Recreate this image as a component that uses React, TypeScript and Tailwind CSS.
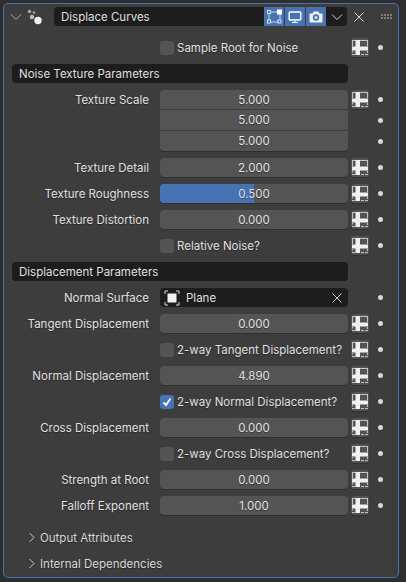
const FONT = "font-['Inter','Noto_Sans',sans-serif]";

const Decorator = () => (
  <div className="flex h-[19px] w-[18px] items-center justify-center rounded-[3px] bg-[#525252] shadow-[0_1px_0_#2e2e2e]">
    <svg width="16" height="15" viewBox="0 0 16 15" fill="none">
      <path
        d="M0 0.5H16M0.5 0V6M15.5 0V6M0.5 11V12.5M15.5 11V13M0 14.5H3M9 14.5H12M13 14.5H16"
        stroke="#c4c4c4"
      />
      <path d="M3.5 0H8V6.5H16V10.5H8V15H3.5V10.5H0V6.5H3.5Z" fill="#f0f0f0" />
    </svg>
  </div>
);

const Dot = () => (
  <div className="flex w-[22px] justify-center">
    <div className="h-[5px] w-[5px] rounded-full bg-[#d8d8d8]" />
  </div>
);

const Right = ({ decorator = true }: { decorator?: boolean }) => (
  <div className="flex w-[50px] shrink-0 items-center pl-[3px]">
    {decorator ? <Decorator /> : <div className="w-[18px]" />}
    <Dot />
  </div>
);

const Row = ({ label, children, decorator = true }: { label?: string; children: React.ReactNode; decorator?: boolean }) => (
  <div className="flex h-[19px] items-center">
    <div className="w-[145px] shrink-0 truncate pt-[2px] text-right text-[#e0e0e0]">{label}</div>
    <div className="ml-[11px] w-[188px] shrink-0">{children}</div>
    <Right decorator={decorator} />
  </div>
);

const NumberField = ({ value }: { value: string }) => (
  <div className="flex h-[19px] items-center justify-center rounded-[4px] bg-[#545454] pt-[2px] text-[#e0e0e0] shadow-[0_1px_0_#2e2e2e]">
    {value}
  </div>
);

const Check = ({ label, checked = false }: { label: string; checked?: boolean }) => (
  <Row>
    <div className="flex items-center text-[#e0e0e0]">
      <div
        className={`flex h-[14px] w-[14px] items-center justify-center rounded-[3px] ${
          checked ? "bg-[#4772b3]" : "bg-[#545454]"
        }`}
      >
        {checked && (
          <svg width="12" height="12" viewBox="0 0 12 12" fill="none">
            <path d="M2.5 6.5L5 9L9.5 2.5" stroke="#ffffff" strokeWidth="1.8" />
          </svg>
        )}
      </div>
      <span className="ml-[3px] whitespace-nowrap pt-[2px]">{label}</span>
    </div>
  </Row>
);

const Section = ({ label }: { label: string }) => (
  <div className="ml-[8px] flex h-[19px] w-[336px] items-center rounded-[4px] bg-[#1d1d1d] pl-[7px] pt-[2px] text-[#e0e0e0]">
    {label}
  </div>
);

const Sub = ({ label }: { label: string }) => (
  <div className="flex h-5 items-center pl-[24px] text-[#d8d8d8]">
    <svg width="8" height="12" viewBox="0 0 8 12" fill="none">
      <path d="M1.5 1L6 5.5L1.5 10" stroke="#c8c8c8" />
    </svg>
    <span className="ml-[4px] pt-[2px]">{label}</span>
  </div>
);

export default function App() {
  return (
    <div className={`h-[582px] w-[406px] overflow-hidden bg-[#2e2e2e] pl-[3px] pt-[3px] text-[11.5px] ${FONT} [text-shadow:0_1px_1px_#00000060]`}>
      <div className="flex h-[575px] w-[396px] flex-col rounded-[5px] border border-[#4772b3] bg-[#3d3d3d]">
        <div className="mt-[3px] flex h-[19px] items-center pl-[6px]">
          <svg width="12" height="8" viewBox="0 0 12 8" fill="none">
            <path d="M1 1.5L6 6.5L11 1.5" stroke="#b0b0b0" />
          </svg>
          <svg className="ml-[5px]" width="16" height="16" viewBox="0 0 16 16">
            <circle cx="2.5" cy="2.5" r="1.8" fill="#a8a8a8" />
            <circle cx="7" cy="3.5" r="1.3" fill="#a8a8a8" />
            <circle cx="5" cy="8" r="2.2" fill="#c0c0c0" />
            <circle cx="11" cy="11.5" r="3.7" fill="#f2f2f2" />
          </svg>
          <div className="ml-[11px] flex h-[19px] w-[210px] items-center rounded-l-[4px] bg-[#1d1d1d] pl-[7px] pt-[2px] text-[#e0e0e0]">
            Displace Curves
          </div>
          <div className="flex h-[19px] w-[20px] items-center justify-center bg-[#4772b3]">
            <svg width="16" height="16" viewBox="0 0 16 16" fill="none">
              <path d="M3 5V11M5 3H11M14 5V11M5 13H12" stroke="#c8d4e8" />
              <rect x="1.5" y="1.5" width="3" height="3" stroke="#d8e0f0" />
              <rect x="1.5" y="11" width="3" height="3" stroke="#d8e0f0" />
              <rect x="12" y="11" width="3" height="3" stroke="#d8e0f0" />
              <rect x="11" y="0.5" width="5" height="5" fill="#ffffff" />
            </svg>
          </div>
          <div className="ml-[1px] flex h-[19px] w-[20px] items-center justify-center bg-[#4772b3]">
            <svg width="16" height="16" viewBox="0 0 16 16" fill="none">
              <rect x="2.2" y="3" width="11.6" height="8" rx="1" stroke="#ffffff" strokeWidth="1.4" />
              <path d="M5 13.5H11M8 12V13.5" stroke="#ffffff" strokeWidth="1.1" />
            </svg>
          </div>
          <div className="ml-[1px] flex h-[19px] w-[20px] items-center justify-center bg-[#4772b3]">
            <svg width="16" height="16" viewBox="0 0 16 16" fill="none">
              <path d="M1.5 4.5H4.5L5.5 2.5H10.5L11.5 4.5H14.5V13.5H1.5Z" fill="#f0f0f0" />
              <circle cx="8" cy="8.5" r="3.2" fill="#4772b3" />
              <circle cx="8" cy="8.5" r="1.6" fill="#d0dcf0" />
            </svg>
          </div>
          <div className="flex h-[19px] w-[21px] items-center justify-center rounded-r-[4px] bg-[#1d1d1d]">
            <svg width="12" height="8" viewBox="0 0 12 8" fill="none">
              <path d="M1 1.5L6 6.5L11 1.5" stroke="#d0d0d0" />
            </svg>
          </div>
          <svg className="ml-[7px]" width="10" height="10" viewBox="0 0 10 10" fill="none">
            <path d="M0.5 0.5L9.5 9.5M9.5 0.5L0.5 9.5" stroke="#d8d8d8" />
          </svg>
          <div className="ml-[17px] grid grid-cols-4 gap-x-[1px] gap-y-[1px]">
            {[0, 1, 2, 3, 4, 5, 6, 7].map((i) => (
              <div key={i} className="h-[2px] w-[2px] bg-[#7c7c7c]" />
            ))}
          </div>
        </div>

        <div className="mt-[12px] flex flex-col gap-[7px]">
          <Check label="Sample Root for Noise" />
          <Section label="Noise Texture Parameters" />
          <div className="flex h-[61px] items-start">
            <div className="flex h-[19px] w-[145px] shrink-0 items-center justify-end pt-[2px] text-[#e0e0e0]">Texture Scale</div>
            <div className="ml-[11px] flex w-[188px] shrink-0 flex-col gap-[1px] overflow-hidden rounded-[4px] shadow-[0_1px_0_#2e2e2e]">
              <div className="flex h-[19px] items-center justify-center bg-[#545454] pt-[2px] text-[#e0e0e0]">5.000</div>
              <div className="flex h-5 items-center justify-center bg-[#545454] pt-[2px] text-[#e0e0e0]">5.000</div>
              <div className="flex h-5 items-center justify-center bg-[#545454] pt-[2px] text-[#e0e0e0]">5.000</div>
            </div>
            <div className="flex flex-col gap-[1px]">
              <div className="h-[19px]"><Right /></div>
              <div className="flex h-5 items-center"><Right decorator={false} /></div>
              <div className="flex h-5 items-center"><Right decorator={false} /></div>
            </div>
          </div>
          <Row label="Texture Detail"><NumberField value="2.000" /></Row>
          <Row label="Texture Roughness">
            <div className="flex h-[19px] items-center justify-center rounded-[4px] bg-[linear-gradient(90deg,#4772b3_50%,#545454_50%)] pt-[2px] text-[#e0e0e0] shadow-[0_1px_0_#2e2e2e]">
              0.500
            </div>
          </Row>
          <Row label="Texture Distortion"><NumberField value="0.000" /></Row>
          <Check label="Relative Noise?" />
          <Section label="Displacement Parameters" />
          <Row label="Normal Surface" decorator={false}>
            <div className="flex h-[19px] items-center rounded-[4px] bg-[#1d1d1d] pl-[4px] pr-[6px] text-[#e0e0e0]">
              <svg width="16" height="16" viewBox="0 0 16 16" fill="none">
                <path d="M1 4V1H4M12 1H15V4M15 12V15H12M4 15H1V12" stroke="#d8d8d8" />
                <rect x="3.5" y="3.5" width="9" height="9" fill="#f0f0f0" />
              </svg>
              <span className="ml-[6px] flex-1 pt-[2px]">Plane</span>
              <svg width="10" height="10" viewBox="0 0 10 10" fill="none">
                <path d="M0.5 0.5L9.5 9.5M9.5 0.5L0.5 9.5" stroke="#c8c8c8" />
              </svg>
            </div>
          </Row>
          <Row label="Tangent Displacement"><NumberField value="0.000" /></Row>
          <Check label="2-way Tangent Displacement?" />
          <Row label="Normal Displacement"><NumberField value="4.890" /></Row>
          <Check label="2-way Normal Displacement?" checked />
          <Row label="Cross Displacement"><NumberField value="0.000" /></Row>
          <Check label="2-way Cross Displacement?" />
          <Row label="Strength at Root"><NumberField value="0.000" /></Row>
          <Row label="Falloff Exponent"><NumberField value="1.000" /></Row>
        </div>

        <div className="mt-[13px]"><Sub label="Output Attributes" /></div>
        <div className="mt-[6px]"><Sub label="Internal Dependencies" /></div>
      </div>
    </div>
  );
}
